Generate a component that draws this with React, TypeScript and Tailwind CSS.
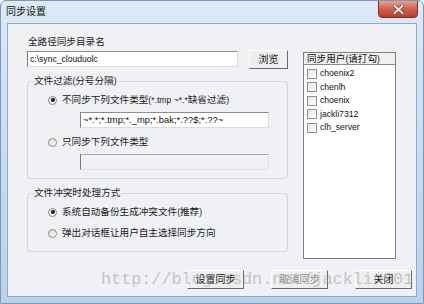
import React from 'react';

const font = { fontFamily: '"Liberation Sans", "Noto Sans CJK SC", sans-serif' };

const users = ['choenix2', 'chenlh', 'choenix', 'jackli7312', 'clh_server'];

// latin runs are drawn a bit narrower than the CJK text, as in the original
const A: React.FC<{ children: React.ReactNode }> = ({ children }) => (
  <span className="text-[8.6px]">{children}</span>
);

const Radio: React.FC<{ checked?: boolean; children: React.ReactNode }> = ({ checked, children }) => (
  <div className="flex items-center h-[14px] pl-[20px]">
    <span className="flex items-center justify-center w-[9px] h-[9px] rounded-full border border-[#8a8a8a] bg-gradient-to-br from-[#d9d9d9] to-white">
      {checked && <span className="w-[4px] h-[4px] rounded-full bg-[#1f1f1f]" />}
    </span>
    <span className="ml-[5px] text-[9.6px] leading-[14px] text-[#1a1a1a]">{children}</span>
  </div>
);

const Button: React.FC<{ label: string; width: string; disabled?: boolean }> = ({ label, width, disabled }) => (
  <div
    className={`${width} h-[19px] flex items-center justify-center bg-[#efefef] border border-t-white border-l-white border-r-[#6a6a6a] border-b-[#6a6a6a] text-[10px] ${
      disabled ? 'text-[#8e8e8e]' : 'text-[#111]'
    }`}
  >
    {label}
  </div>
);

export default function App() {
  return (
    <div className="w-[424px] h-[304px] bg-white" style={font}>
      <div className="relative w-[424px] h-[304px] flex flex-col rounded-t-[6px] border border-[#7c98b8] bg-gradient-to-b from-[#dde9f6] via-[#c9dcf0] to-[#bcd2ea] overflow-hidden">
        {/* title bar */}
        <div className="flex justify-between items-start h-[22px] pl-[5px] pr-[5px]">
          <span className="mt-[5px] text-[10px] leading-[12px] text-[#111]">同步设置</span>
          <div className="w-[40px] h-[18px] -mt-px flex items-center justify-center rounded-b-[4px] border border-[#7e3128] bg-gradient-to-b from-[#e7a193] via-[#d2604c] to-[#c13a22]">
            <svg width="11" height="9" viewBox="0 0 11 9">
              <path d="M1.5 1 L9.5 8 M9.5 1 L1.5 8" stroke="#6b2118" strokeWidth="3.2" strokeLinecap="round" />
              <path d="M1.5 1 L9.5 8 M9.5 1 L1.5 8" stroke="#ffffff" strokeWidth="2" strokeLinecap="round" />
            </svg>
          </div>
        </div>

        {/* client area */}
        <div className="mx-[6px] h-[274px] flex flex-col bg-[#eff1f4] border border-[#93aac6]">
          <div className="flex pl-[19px] pt-[11px]">
            <div className="w-[261px] flex flex-col">
              <span className="pl-[1px] text-[9.6px] leading-[14px] text-[#1a1a1a]">全路径同步目录名</span>
              <div className="flex items-start mt-[1px]">
                <div className="w-[211px] h-[16px] mt-[1px] flex items-center pl-[2px] bg-white border border-t-[#8d8d8d] border-l-[#7a7a7a] border-r-[#dcdcdc] border-b-[#dcdcdc] text-[8.6px] text-[#111]">
                  c:\sync_clouduolc
                </div>
                <div className="ml-[11px]">
                  <Button label="浏览" width="w-[39px]" />
                </div>
              </div>

              <fieldset className="mt-[5px] border border-[#d0d7df] rounded-[3px] pb-[8px]">
                <legend className="ml-[5px] px-[1px] text-[9.6px] leading-[14px] text-[#1a1a1a]">
                  文件过滤<A>(</A>分号分隔<A>)</A>
                </legend>
                <div className="mt-[5px]">
                  <Radio checked>
                    不同步下列文件类型<A>(*.tmp ~*.*</A>缺省过滤<A>)</A>
                  </Radio>
                </div>
                <div className="mt-[5px] ml-[52px] w-[189px] h-[16px] flex items-center pl-[2px] bg-white border border-t-[#8d8d8d] border-l-[#7a7a7a] border-r-[#dcdcdc] border-b-[#dcdcdc] text-[9.4px] text-[#111]">
                  ~*.*;*.tmp;*._mp;*.bak;*.??$;*.??~
                </div>
                <div className="mt-[7px]">
                  <Radio>只同步下列文件类型</Radio>
                </div>
                <div className="mt-[5px] ml-[52px] w-[189px] h-[16px] bg-[#eff1f4] border border-t-[#a9a9a9] border-l-[#7a7a7a] border-r-[#dedede] border-b-[#dedede]" />
              </fieldset>

              <fieldset className="mt-[7px] border border-[#d0d7df] rounded-[3px] pb-[11px]">
                <legend className="ml-[5px] px-[1px] text-[9.6px] leading-[14px] text-[#1a1a1a]">文件冲突时处理方式</legend>
                <div className="mt-[5px]">
                  <Radio checked>
                    系统自动备份生成冲突文件<A>(</A>推荐<A>)</A>
                  </Radio>
                </div>
                <div className="mt-[7px]">
                  <Radio>弹出对话框让用户自主选择同步方向</Radio>
                </div>
              </fieldset>
            </div>

            {/* user list */}
            <div className="ml-[15px] mt-[17px] w-[93px] h-[207px] flex flex-col bg-white border border-[#7f7f7f]">
              <div className="h-[12px] flex items-center pl-[3px] bg-[#f0f0f0] border-b border-[#8a8a8a] text-[9.6px] leading-[12px] text-[#111]">
                同步用户<A>(</A>请打勾<A>)</A>
              </div>
              <div className="pt-[2px]">
                {users.map((u) => (
                  <div key={u} className="flex items-center h-[13.5px] pl-[3px]">
                    <span className="w-[10px] h-[10px] border border-[#8f8f8f] bg-gradient-to-br from-[#e6e6e6] to-white" />
                    <span className="ml-[3px] text-[8.6px] leading-[13px] text-[#111]">{u}</span>
                  </div>
                ))}
              </div>
            </div>
          </div>

          {/* bottom buttons */}
          <div className="mt-auto mb-[7px] flex justify-end gap-[27px] pr-[4px]">
            <Button label="设置同步" width="w-[57px]" />
            <Button label="取消同步" width="w-[57px]" disabled />
            <Button label="关闭" width="w-[57px]" />
          </div>
        </div>

        {/* watermark */}
        <div
          className="absolute left-[100px] top-[271px] text-[16.8px] leading-none text-[#9a9a9a] opacity-50 pointer-events-none whitespace-nowrap"
          style={{ fontFamily: '"Liberation Mono", monospace' }}
        >
          http://blog.csdn.net/jacklin001
        </div>
      </div>
    </div>
  );
}
